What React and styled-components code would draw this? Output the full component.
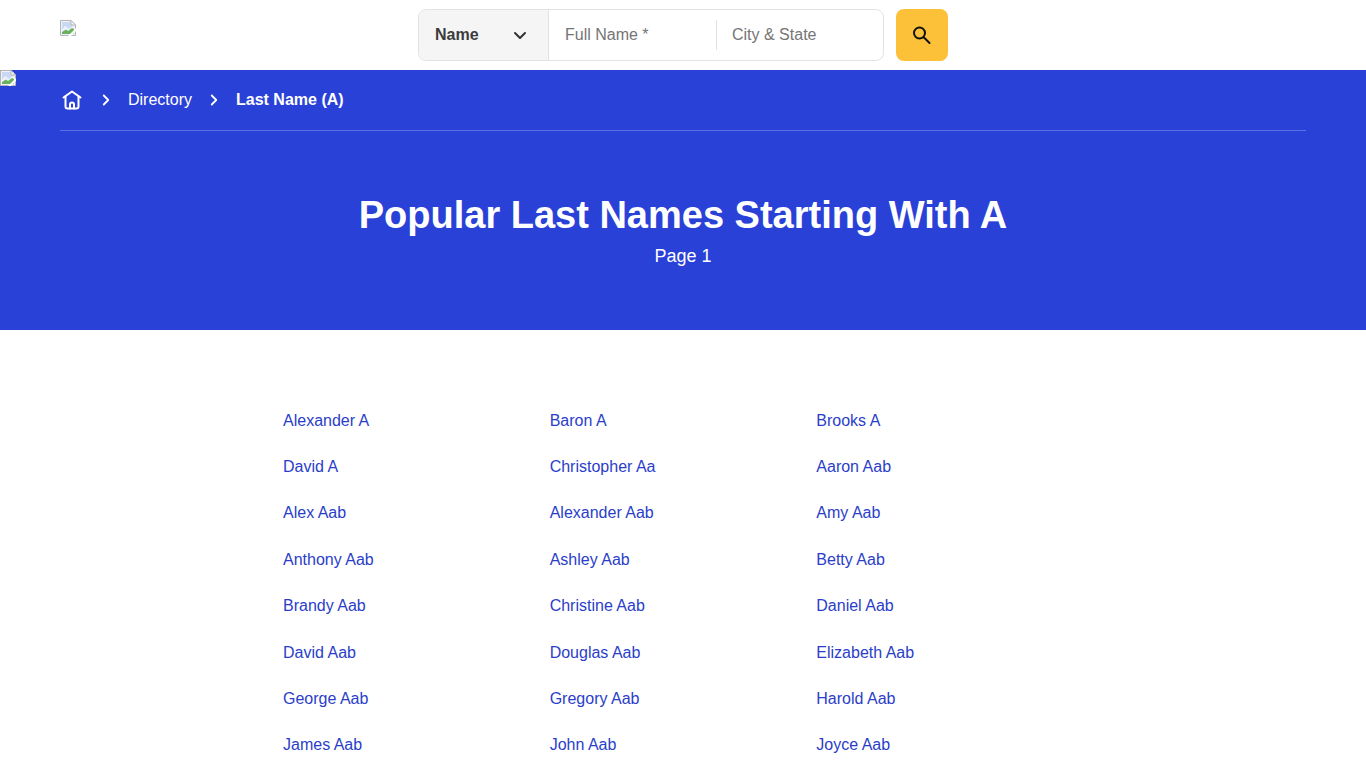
import React from "react"
import styled, { createGlobalStyle } from "styled-components"

const NAMES = [
    ["Alexander A", "Baron A", "Brooks A"],
    ["David A", "Christopher Aa", "Aaron Aab"],
    ["Alex Aab", "Alexander Aab", "Amy Aab"],
    ["Anthony Aab", "Ashley Aab", "Betty Aab"],
    ["Brandy Aab", "Christine Aab", "Daniel Aab"],
    ["David Aab", "Douglas Aab", "Elizabeth Aab"],
    ["George Aab", "Gregory Aab", "Harold Aab"],
    ["James Aab", "John Aab", "Joyce Aab"],
]

function BrokenImage() {
    return (
        <svg width="16" height="16" viewBox="0 0 16 16">
            <path d="M0.5 0.5H11L15.5 5V15.5H0.5Z" fill="#eef2fa" stroke="#b4b4b4" />
            <path d="M2 10L5 6L9 9L14 5V2H2Z" fill="#c9d9f4" />
            <path d="M11 0.5V5H15.5Z" fill="#ffffff" stroke="#b4b4b4" />
            <path d="M2 14V12L6 9.5L8 11L12 8L14 9V14Z" fill="#69b25e" />
            <path d="M8 16L16 8V11L11 16Z" fill="#ffffff" />
        </svg>
    )
}

export default function App() {
    return (
        <>
            <GlobalStyle />
            <Header>
                <LogoSlot><BrokenImage /></LogoSlot>
                <SearchArea>
                    <SearchBox>
                        <TypeSelect>
                            <span>Name</span>
                            <svg width="24" height="24" viewBox="0 0 24 24" fill="none" stroke="#333" strokeWidth="2" strokeLinecap="round" strokeLinejoin="round">
                                <path d="M7 10l5 5 5-5" />
                            </svg>
                        </TypeSelect>
                        <Field $width="167px" $pad="16px">Full Name *</Field>
                        <Divider />
                        <Field $width="166px" $pad="15px">City &amp; State</Field>
                    </SearchBox>
                    <SearchButton aria-label="Search">
                        <svg width="24" height="24" viewBox="0 0 24 24" fill="none" stroke="#111" strokeWidth="2" strokeLinecap="round">
                            <circle cx="9.5" cy="10" r="5.5" />
                            <path d="M14 14.5L19.5 20" />
                        </svg>
                    </SearchButton>
                </SearchArea>
            </Header>

            <Hero>
                <HeroBroken><BrokenImage /></HeroBroken>
                <Breadcrumbs>
                    <svg width="24" height="24" viewBox="0 0 24 24" fill="none" stroke="#fff" strokeWidth="2" strokeLinecap="round" strokeLinejoin="round">
                        <path d="M3.5 9.5L12 3.5l8.5 6" />
                        <path d="M5.5 8.5v10a2 2 0 0 0 2 2h9a2 2 0 0 0 2-2v-10" />
                        <path d="M10 20.5v-4a2 2 0 0 1 4 0v4" />
                    </svg>
                    <Chevron viewBox="0 0 24 24"><path d="M9 6l6 6-6 6" /></Chevron>
                    <Crumb>Directory</Crumb>
                    <Chevron viewBox="0 0 24 24"><path d="M9 6l6 6-6 6" /></Chevron>
                    <Crumb $current>Last Name (A)</Crumb>
                </Breadcrumbs>
                <HeroText>
                    <Title>Popular Last Names Starting With A</Title>
                    <PageLabel>Page 1</PageLabel>
                </HeroText>
            </Hero>

            <Directory>
                {NAMES.flat().map((name, i) => (
                    <NameLink key={i} href="#">{name}</NameLink>
                ))}
            </Directory>
        </>
    )
}

const GlobalStyle = createGlobalStyle`
    html, body {
        margin: 0;
        height: 768px;
        overflow: hidden;
        background: #fff;
        font-family: "Liberation Sans", Arial, sans-serif;
    }
`
const Header = styled.header`
    height: 70px;
    padding: 0 60px;
    box-sizing: border-box;
    position: relative;
    display: flex;
    justify-content: center;
    align-items: flex-start;
`
const LogoSlot = styled.div`
    position: absolute;
    left: 60px;
    top: 20px;
    width: 16px;
    height: 16px;
`
const SearchArea = styled.div`
    display: flex;
    gap: 12px;
    padding-top: 9px;
`
const SearchBox = styled.div`
    width: 466px;
    height: 52px;
    box-sizing: border-box;
    display: flex;
    align-items: center;
    border: 1px solid #e2e2e2;
    border-radius: 8px;
    overflow: hidden;
`
const TypeSelect = styled.div`
    width: 130px;
    height: 100%;
    flex-shrink: 0;
    box-sizing: border-box;
    padding: 0 16px 0 16px;
    display: flex;
    align-items: center;
    justify-content: space-between;
    background: #f5f5f5;
    border-right: 1px solid #e2e2e2;
    font-size: 16px;
    font-weight: 700;
    color: #3c3c3c;
`
const Field = styled.div`
    width: ${props => props.$width};
    box-sizing: border-box;
    padding-left: ${props => props.$pad};
    font-size: 16px;
    color: #757575;
`
const Divider = styled.div`
    width: 1px;
    height: 30px;
    background: #e2e2e2;
    flex-shrink: 0;
`
const SearchButton = styled.button`
    width: 52px;
    height: 52px;
    padding: 0;
    border: none;
    border-radius: 8px;
    background: #fcc138;
    display: flex;
    align-items: center;
    justify-content: center;
`
const Hero = styled.section`
    height: 260px;
    box-sizing: border-box;
    padding: 0 60px;
    background: #2a41d8;
    color: #fff;
    position: relative;
`
const HeroBroken = styled.div`
    position: absolute;
    left: 0;
    top: 0;
    width: 16px;
    height: 16px;
`
const Breadcrumbs = styled.nav`
    height: 61px;
    box-sizing: border-box;
    display: flex;
    align-items: center;
    border-bottom: 1px solid rgba(255, 255, 255, 0.25);
`
const Chevron = styled.svg`
    width: 18px;
    height: 18px;
    margin: 0 13px;
    fill: none;
    stroke: #fff;
    stroke-width: 2.4;
    stroke-linecap: round;
    stroke-linejoin: round;
`
const Crumb = styled.span`
    font-size: 16px;
    font-weight: ${props => (props.$current ? 700 : 400)};
`
const HeroText = styled.div`
    text-align: center;
    padding-top: 61px;
`
const Title = styled.h1`
    margin: 0;
    font-size: 38px;
    line-height: 46px;
    font-weight: 700;
`
const PageLabel = styled.div`
    margin-top: 6px;
    font-size: 18px;
    line-height: 24px;
`
const Directory = styled.main`
    width: 800px;
    margin: 0 auto;
    padding: 79.75px 0 0 0;
    display: grid;
    grid-template-columns: repeat(3, 266.67px);
    grid-auto-rows: 46.37px;
`
const NameLink = styled.a`
    font-size: 16px;
    line-height: 22px;
    color: #2a3ec9;
    text-decoration: none;
`
